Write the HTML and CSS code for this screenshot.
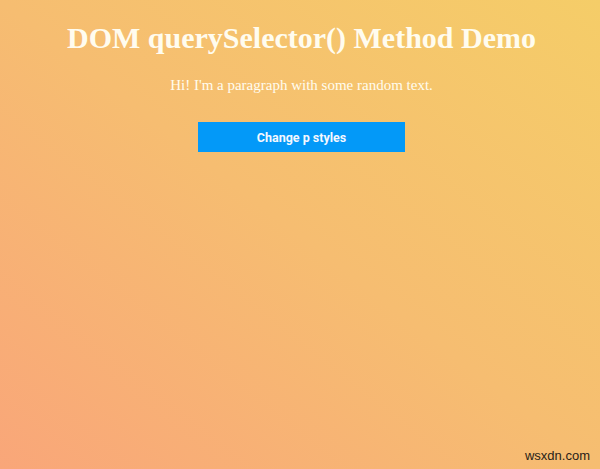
FILE: index.html
```html
<!DOCTYPE html>
<html>
<head>
<meta charset="utf-8">
<link rel="stylesheet" href="styles.css">
</head>
<body>
<main class="page">
  <h1 class="title">DOM querySelector() Method Demo</h1>
  <p class="text">Hi! I'm a paragraph with some random text.</p>
  <button class="btn">Change p styles</button>
</main>
<footer class="mark">wsxdn.com</footer>
</body>
</html>
```
FILE: styles.css
```css
html, body {
  margin: 0;
  height: 100%;
}
body {
  background: linear-gradient(to top right, #f9a679 0%, #f6bd71 50%, #f5cd68 100%);
  font-family: "Liberation Serif", "Times New Roman", serif;
  display: flex;
  flex-direction: column;
  justify-content: space-between;
  overflow: hidden;
}
.page {
  display: flex;
  flex-direction: column;
  align-items: center;
  padding-top: 23px;
  padding-left: 3px;
}
.title {
  margin: 0;
  font-size: 30px;
  font-weight: bold;
  color: #fffcef;
  line-height: 30px;
}
.text {
  margin: 23px 0 0;
  font-size: 15px;
  color: #fffcef;
  line-height: 18px;
}
.btn {
  margin-top: 28px;
  width: 207px;
  height: 30px;
  border: none;
  background: #0399f8;
  color: #f4f8ff;
  font-family: "Roboto", "Liberation Sans", sans-serif;
  font-weight: bold;
  font-size: 12.5px;
}
.mark {
  align-self: flex-end;
  font-family: "Liberation Sans", Arial, sans-serif;
  font-size: 13px;
  color: #2a2218;
  padding: 0 10px 6px 0;
}
```
